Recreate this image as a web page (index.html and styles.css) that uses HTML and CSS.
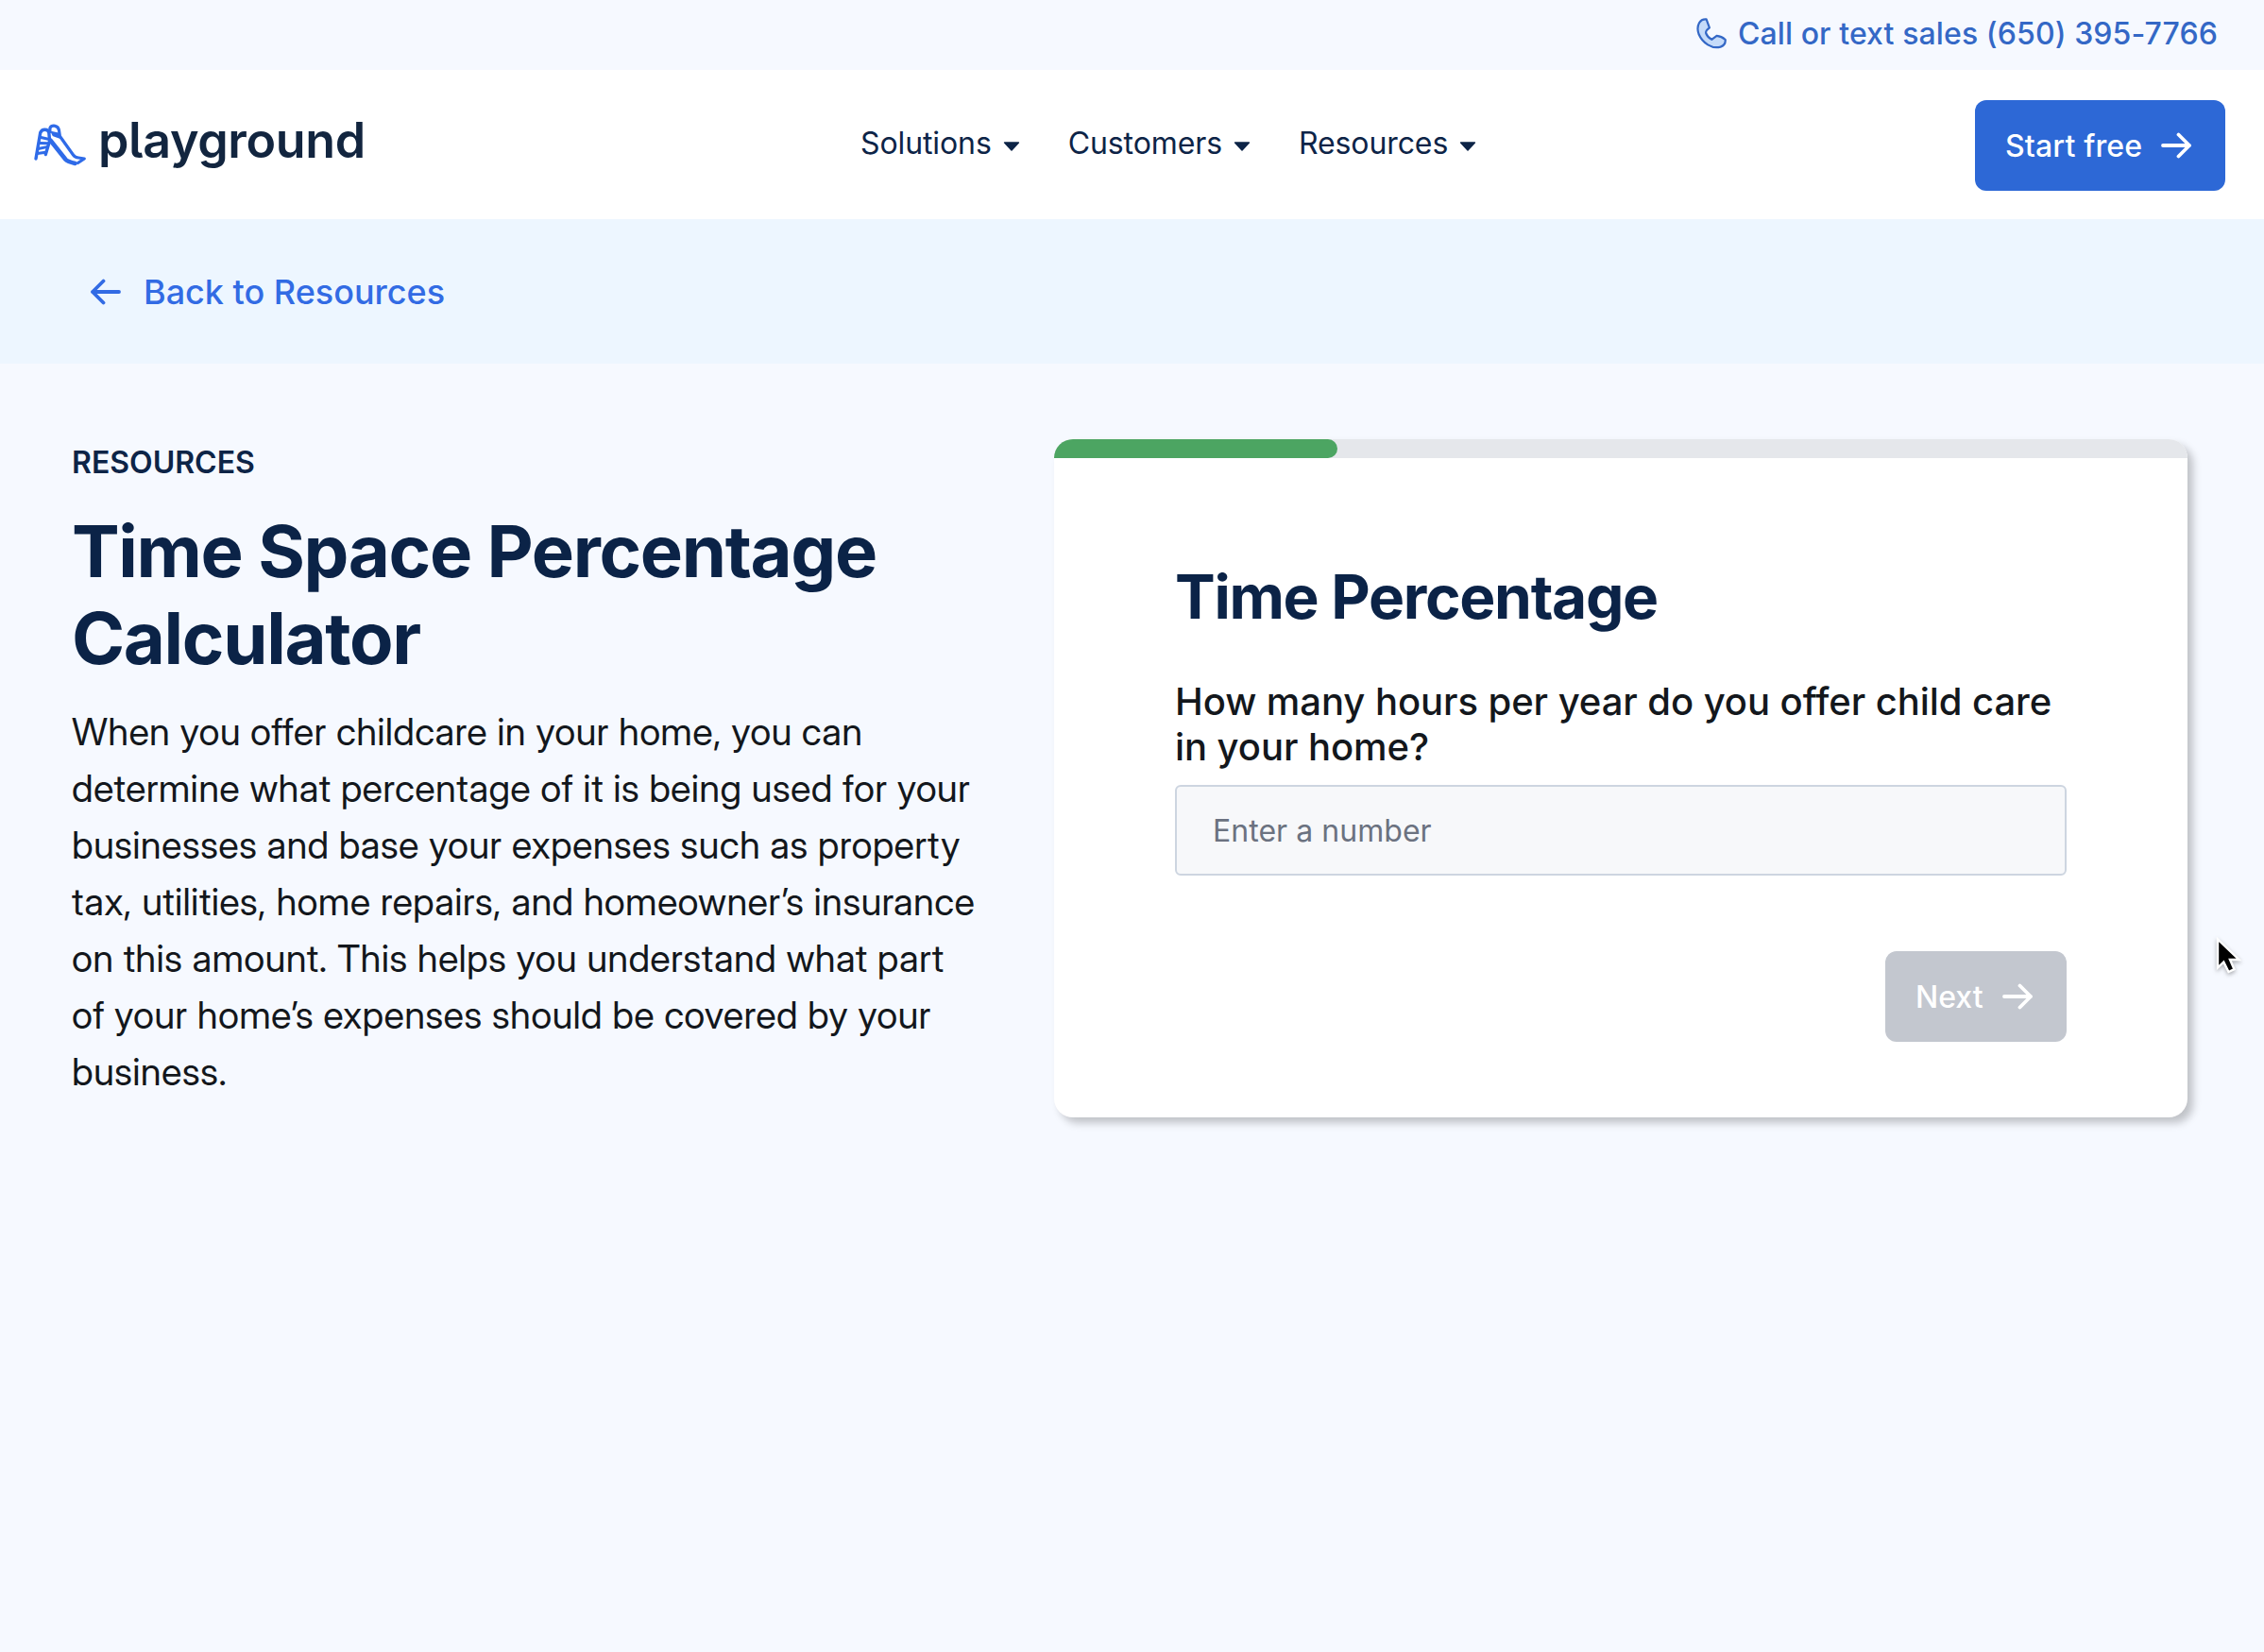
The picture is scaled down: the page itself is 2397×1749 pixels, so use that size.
FILE: index.html
```html
<!DOCTYPE html>
<html lang="en">
<head>
<meta charset="utf-8">
<title>Time Space Percentage Calculator</title>
<link rel="stylesheet" href="styles.css">
</head>
<body>
<div class="topbar">
  <a class="call">
    <svg class="call-icon" viewBox="0 0 34 34"><path d="M4 6.3Q6.5 2 11.6 2.4L14.9 11.3Q10.3 14.6 11.3 17.5Q13 21.6 17.3 23.9L22.6 19.9Q27.5 20.3 31.7 24Q32.2 29.5 26.6 31.6C17.5 34.2 7.5 27.5 3.5 18Q1.2 11.4 4 6.3Z" fill="#c5dbf9" stroke="#3468c6" stroke-width="2.2" stroke-linejoin="round"/></svg>
    <span>Call or text sales (650) 395-7766</span>
  </a>
</div>

<header class="header">
  <a class="logo">
    <svg class="logo-icon" viewBox="0 0 56 46" fill="none" stroke="#2f6be8" stroke-linejoin="round" stroke-linecap="round">
      <path d="M2 37L6.7 9.5Q8 6.3 11.5 6.3Q15.2 6.3 15.8 9.5L16.6 18L12.3 32.5" stroke-width="3.4"/>
      <path d="M7.4 14.5L16 16.5M6.2 20.5L14.6 20.8M4.4 26.5L13.5 24.6M3.4 31.5L12.5 30.2" stroke-width="3"/>
      <path d="M16.9 8.6V4.6Q18.2 1.8 22.2 2.3Q25.7 2.9 26.4 6.6L27.4 13.2L41.5 33Q43.5 35.7 47 36L53.3 37L46.5 41.5" stroke-width="3.2"/>
      <path d="M18.8 8.9L25.7 10.5L27.5 14.7L20.5 12.3Z" fill="#2f6be8" stroke-width="2"/>
      <path d="M17.5 17.7L33.6 38Q35.5 40 43.5 42" stroke-width="4.6"/>
    </svg>
    <span class="logo-word">playground</span>
  </a>
  <nav class="nav">
    <a class="nav-item">Solutions<svg class="caret" viewBox="0 0 18 10"><path d="M1.6 1H16.4L9 9Z"/></svg></a>
    <a class="nav-item">Customers<svg class="caret" viewBox="0 0 18 10"><path d="M1.6 1H16.4L9 9Z"/></svg></a>
    <a class="nav-item">Resources<svg class="caret" viewBox="0 0 18 10"><path d="M1.6 1H16.4L9 9Z"/></svg></a>
  </nav>
  <a class="button button-primary">Start free<svg class="arrow" viewBox="0 0 32 28"><path d="M2 14H30M18.5 2.5L30 14L18.5 25.5"/></svg></a>
</header>

<div class="back-band">
  <a class="back"><svg class="arrow" viewBox="0 0 32 28"><path d="M30 14H2M13.5 2.5L2 14L13.5 25.5"/></svg>Back to Resources</a>
</div>

<main class="main">
  <section class="intro">
    <p class="eyebrow">RESOURCES</p>
    <h1 class="title">Time Space Percentage<br>Calculator</h1>
    <p class="lead">When you offer childcare in your home, you can<br>determine what percentage of it is being used for your<br>businesses and base your expenses such as property<br>tax, utilities, home repairs, and homeowner’s insurance<br>on this amount. This helps you understand what part<br>of your home’s expenses should be covered by your<br>business.</p>
  </section>
  <section class="card">
    <div class="progress"><div class="progress-fill" style="width:25%"></div></div>
    <form class="card-body">
      <h2 class="card-title">Time Percentage</h2>
      <label class="question" for="hours">How many hours per year do you offer child care<br>in your home?</label>
      <input class="field" id="hours" type="text" placeholder="Enter a number">
      <button class="button button-disabled" type="button">Next<svg class="arrow" viewBox="0 0 32 28"><path d="M2 14H30M18.5 2.5L30 14L18.5 25.5"/></svg></button>
    </form>
  </section>
</main>

<svg class="cursor" viewBox="0 0 32 44"><path d="M4 2.5V32.5L10.3 26.5L15.5 37L21.5 34.2L17 24H26.5Z" fill="#000" stroke="#fff" stroke-width="2.4"/></svg>
</body>
</html>
```
FILE: styles.css
```css
* { box-sizing: border-box; }

body {
  margin: 0;
  min-height: 1749px;
  background: #f6f9ff;
  color: #13171c;
  font-family: Inter, "Liberation Sans", sans-serif;
  font-size: 32px;
}

h1, h2, p { margin: 0; }
svg { display: block; flex: none; }

.topbar {
  display: flex;
  justify-content: flex-end;
  align-items: center;
  height: 74px;
  padding: 0 49px 4px 0;
}

.call {
  display: flex;
  align-items: center;
  gap: 11px;
  color: #3468c6;
  font-weight: 500;
  letter-spacing: 0.1px;
  white-space: nowrap;
}

.call-icon { width: 34px; height: 34px; }

.header {
  display: flex;
  align-items: center;
  height: 158px;
  padding: 2px 41px 0 36px;
  background: #fff;
}

.logo {
  display: flex;
  align-items: center;
  gap: 12px;
  width: 875px;
}

.logo-icon { width: 56px; height: 46px; }

.logo-word {
  margin-top: -12px;
  color: #12253f;
  font-size: 52px;
  font-weight: 600;
  letter-spacing: -0.35px;
  font-feature-settings: "cv05";
}

.nav {
  display: flex;
  gap: 51px;
  margin-top: -6px;
}

.nav-item {
  display: flex;
  align-items: center;
  gap: 12px;
  color: #0d2447;
  letter-spacing: -0.1px;
}

.caret {
  width: 18px;
  height: 10px;
  margin-top: 8px;
  fill: #0d2447;
  stroke: #0d2447;
  stroke-width: 1.5;
  stroke-linejoin: round;
}

.arrow {
  width: 32px;
  height: 28px;
  fill: none;
  stroke: currentColor;
  stroke-width: 3.8;
  stroke-linecap: round;
  stroke-linejoin: round;
}

.button {
  display: flex;
  align-items: center;
  height: 96px;
  border: 0;
  border-radius: 12px;
  color: #fff;
  font: 500 32px Inter, "Liberation Sans", sans-serif;
}

.button-primary {
  gap: 20px;
  width: 265px;
  margin-left: auto;
  padding-left: 32px;
  background: #2d68d6;
  letter-spacing: 0.15px;
}

.button-disabled {
  align-self: flex-end;
  gap: 20px;
  width: 192px;
  margin-top: 80px;
  padding: 0 0 0 32px;
  background: #c3c7cf;
}

.back-band {
  display: flex;
  align-items: center;
  height: 153px;
  padding-left: 96px;
  background: #edf6ff;
}

.back {
  display: flex;
  align-items: center;
  gap: 24px;
  color: #326be4;
  font-size: 36px;
  font-weight: 500;
}

.main {
  display: grid;
  grid-template-columns: 1fr 1200px;
  align-items: start;
  padding: 80px 81px 0 76px;
}

.eyebrow {
  padding-top: 1px;
  color: #0d2447;
  font-weight: 600;
  line-height: 48px;
}

.title {
  margin-top: 23px;
  color: #0b2347;
  font-size: 76px;
  line-height: 92px;
  letter-spacing: -1.36px;
}

.lead {
  margin-top: 24px;
  font-family: "Inter Display", Inter, "Liberation Sans", sans-serif;
  font-size: 40px;
  line-height: 60px;
  letter-spacing: 0.27px;
  white-space: nowrap;
}

.card {
  height: 718px;
  border-radius: 20px;
  background: #fff;
  box-shadow: 6px 6px 8px rgba(0, 0, 0, 0.22);
}

.progress {
  height: 20px;
  border-radius: 20px 20px 0 0;
  background: #e5e7eb;
  overflow: hidden;
}

.progress-fill {
  height: 20px;
  border-radius: 0 10px 10px 0;
  background: #4ca562;
}

.card-body {
  display: flex;
  flex-direction: column;
  padding: 108px 128px 0;
}

.card-title {
  color: #0b2347;
  font-size: 64px;
  line-height: 77px;
  letter-spacing: -1.3px;
}

.question {
  margin-top: 49px;
  font-size: 40px;
  font-weight: 500;
  line-height: 48px;
  letter-spacing: -0.06px;
  white-space: nowrap;
}

.field {
  height: 96px;
  margin-top: 16px;
  padding: 0 38px;
  border: 2px solid #cdd5e0;
  border-radius: 6px;
  background: #f7f8fa;
  font: 400 32px Inter, "Liberation Sans", sans-serif;
  letter-spacing: 0.04px;
}

.field::placeholder { color: #6b7280; opacity: 1; }

/* Pointer floats above the page */
.cursor {
  position: absolute;
  left: 2344px;
  top: 992px;
  width: 32px;
  height: 44px;
  filter: drop-shadow(0 2px 2px rgba(0, 0, 0, 0.3));
}
```
